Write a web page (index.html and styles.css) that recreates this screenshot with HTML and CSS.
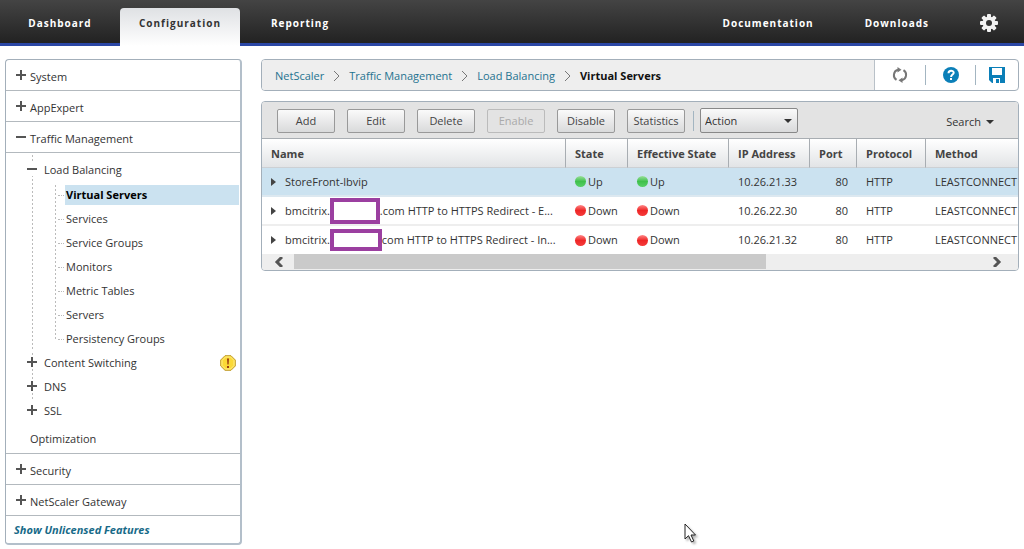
FILE: index.html
```html
<!DOCTYPE html>
<html lang="en">

<head>
    <meta charset="UTF-8">
    <meta name="viewport" content="width=device-width, initial-scale=1.0">
    <title>NetScaler - Virtual Servers</title>
    <link rel="stylesheet" href="styles.css">
</head>

<body>
    <header class="topbar">
        <nav class="tabs">
            <a class="tab" href="#">Dashboard</a>
            <a class="tab active" href="#">Configuration</a>
            <a class="tab" href="#">Reporting</a>
        </nav>
        <div class="links">
            <a href="#">Documentation</a>
            <a href="#">Downloads</a>
            <button type="button" class="gear" aria-label="Settings">
                <svg width="18" height="18" viewBox="0 0 18 18">
                    <g fill="#f2f2f2">
                        <rect x="7" y="0" width="4" height="18" rx="1" />
                        <rect x="7" y="0" width="4" height="18" rx="1" transform="rotate(45 9 9)" />
                        <rect x="7" y="0" width="4" height="18" rx="1" transform="rotate(90 9 9)" />
                        <rect x="7" y="0" width="4" height="18" rx="1" transform="rotate(135 9 9)" />
                        <circle cx="9" cy="9" r="6.5" />
                    </g>
                    <circle cx="9" cy="9" r="3" fill="#333" />
                </svg>
            </button>
        </div>
    </header>

    <main class="main">
        <aside class="sidebar">
            <div class="group"><button type="button" class="toggle plus" aria-label="Expand System"></button><a href="#">System</a></div>
            <div class="group"><button type="button" class="toggle plus" aria-label="Expand AppExpert"></button><a href="#">AppExpert</a></div>
            <div class="group"><button type="button" class="toggle" aria-label="Collapse Traffic Management"></button><a href="#">Traffic Management</a></div>
            <div class="subtree">
                <ul class="tree">
                    <li>
                        <div class="node"><button type="button" class="toggle" aria-label="Collapse Load Balancing"></button><a href="#">Load Balancing</a></div>
                        <ul class="leaves">
                            <li class="selected"><a href="#">Virtual Servers</a></li>
                            <li><a href="#">Services</a></li>
                            <li><a href="#">Service Groups</a></li>
                            <li><a href="#">Monitors</a></li>
                            <li><a href="#">Metric Tables</a></li>
                            <li><a href="#">Servers</a></li>
                            <li><a href="#">Persistency Groups</a></li>
                        </ul>
                    </li>
                    <li>
                        <div class="node">
                            <button type="button" class="toggle plus" aria-label="Expand Content Switching"></button><a href="#">Content Switching</a>
                            <svg class="warn" width="16" height="16" viewBox="0 0 16 16">
                                <path d="M5 .7h6L15.3 5v6L11 15.3H5L.7 11V5z" fill="#fbd936" stroke="#c09a2a" />
                                <path d="M5.500 2h5L14 5.500v5L10.500 14h-5L2 10.500v-5z" fill="none" stroke="#fdeb86" />
                                <path d="M7 3.500h2L8.600 9.500H7.400z" fill="#9a3c10" />
                                <rect x="7" y="11" width="2" height="2" fill="#9a3c10" />
                            </svg>
                        </div>
                    </li>
                    <li><div class="node"><button type="button" class="toggle plus" aria-label="Expand DNS"></button><a href="#">DNS</a></div></li>
                    <li><div class="node"><button type="button" class="toggle plus" aria-label="Expand SSL"></button><a href="#">SSL</a></div></li>
                </ul>
                <a class="lone" href="#">Optimization</a>
            </div>
            <div class="group"><button type="button" class="toggle plus" aria-label="Expand Security"></button><a href="#">Security</a></div>
            <div class="group"><button type="button" class="toggle plus" aria-label="Expand NetScaler Gateway"></button><a href="#">NetScaler Gateway</a></div>
            <a class="unlicensed" href="#">Show Unlicensed Features</a>
        </aside>

        <section class="content">
            <div class="pathbar">
                <nav class="crumbs">
                    <a href="#">NetScaler</a>
                    <svg width="7" height="12" viewBox="0 0 7 12"><path d="M1 1l5 5-5 5" /></svg>
                    <a href="#">Traffic Management</a>
                    <svg width="7" height="12" viewBox="0 0 7 12"><path d="M1 1l5 5-5 5" /></svg>
                    <a href="#">Load Balancing</a>
                    <svg width="7" height="12" viewBox="0 0 7 12"><path d="M1 1l5 5-5 5" /></svg>
                    <b>Virtual Servers</b>
                </nav>
                <div class="tools">
                    <button type="button" aria-label="Refresh">
                        <svg width="16" height="16" viewBox="0 0 16 16">
                            <path d="M4.500 12.800A5.500 5.500 0 0 1 6 2.800M11.500 3.200A5.500 5.500 0 0 1 10 13.200" fill="none" stroke="#777" stroke-width="2" />
                            <path d="M5.500 0l4 2.800-4 2.800zM10.500 16l-4-2.800 4-2.800z" fill="#777" />
                        </svg>
                    </button>
                    <button type="button" aria-label="Help">
                        <svg width="16" height="16" viewBox="0 0 16 16">
                            <circle cx="8" cy="8" r="8" fill="#0b7fb8" />
                            <path d="M5.500 6.200c0-3.400 5.200-3.200 5.200-.4C10.700 7.600 8.100 7.600 8.100 10" fill="none" stroke="#fff" stroke-width="2" />
                            <rect x="7" y="11" width="2" height="2" fill="#fff" />
                        </svg>
                    </button>
                    <button type="button" aria-label="Save">
                        <svg width="16" height="16" viewBox="0 0 16 16">
                            <path d="M0 0h16v16H3l-3-3z" fill="#0b7fb8" />
                            <path d="M3 1h10v7H3z" fill="#fff" />
                            <path d="M4 11h7v5H4z" fill="#fff" />
                            <path d="M7 12h3v4H7z" fill="#0b7fb8" />
                        </svg>
                    </button>
                </div>
            </div>

            <div class="panel">
                <div class="toolbar">
                    <button type="button" class="btn">Add</button>
                    <button type="button" class="btn">Edit</button>
                    <button type="button" class="btn">Delete</button>
                    <button type="button" class="btn" disabled>Enable</button>
                    <button type="button" class="btn">Disable</button>
                    <button type="button" class="btn">Statistics</button>
                    <div class="action">
                        <select aria-label="Action">
                            <option>Action</option>
                        </select>
                    </div>
                    <button type="button" class="search">Search</button>
                </div>
                <table class="grid">
                    <colgroup>
                        <col>
                        <col class="c-state">
                        <col class="c-effective">
                        <col class="c-ip">
                        <col class="c-port">
                        <col class="c-protocol">
                        <col class="c-method">
                    </colgroup>
                    <thead>
                        <tr>
                            <th>Name</th>
                            <th>State</th>
                            <th>Effective State</th>
                            <th>IP Address</th>
                            <th>Port</th>
                            <th>Protocol</th>
                            <th>Method</th>
                        </tr>
                    </thead>
                    <tbody>
                        <tr class="selected">
                            <td><div class="name">StoreFront-lbvip</div></td>
                            <td><span class="up">Up</span></td>
                            <td><span class="up">Up</span></td>
                            <td>10.26.21.33</td>
                            <td class="num">80</td>
                            <td>HTTP</td>
                            <td>LEASTCONNECT</td>
                        </tr>
                        <tr>
                            <td><div class="name">bmcitrix.<span class="mask tall"></span>.com HTTP to HTTPS Redirect - E...</div></td>
                            <td><span class="down">Down</span></td>
                            <td><span class="down">Down</span></td>
                            <td>10.26.22.30</td>
                            <td class="num">80</td>
                            <td>HTTP</td>
                            <td>LEASTCONNECT</td>
                        </tr>
                        <tr>
                            <td><div class="name">bmcitrix.<span class="mask"></span>com HTTP to HTTPS Redirect - In...</div></td>
                            <td><span class="down">Down</span></td>
                            <td><span class="down">Down</span></td>
                            <td>10.26.21.32</td>
                            <td class="num">80</td>
                            <td>HTTP</td>
                            <td>LEASTCONNECT</td>
                        </tr>
                    </tbody>
                </table>
                <div class="scroll">
                    <button type="button" aria-label="Scroll left"><svg width="10" height="10" viewBox="0 0 10 10"><path d="M9 0L4 5l5 5" /></svg></button>
                    <div class="track"><div class="thumb"></div></div>
                    <button type="button" aria-label="Scroll right"><svg width="10" height="10" viewBox="0 0 10 10"><path d="M1 0l5 5-5 5" /></svg></button>
                </div>
            </div>
        </section>
    </main>

    <svg class="pointer" width="14" height="21" viewBox="0 0 14 21">
        <path d="M1 1v15l3.500-3.300L7.500 19l2.300-1-2.800-6h4.500z" fill="#fff" stroke="#222" />
    </svg>
</body>

</html>
```
FILE: styles.css
```css
* {
    padding: 0;
    margin: 0;
    box-sizing: border-box;
}

body {
    background: #fff;
    color: #333;
    font-family: "Open Sans", "Noto Sans", sans-serif;
    font-size: 11px;
    line-height: 16px;
}

a {
    color: inherit;
    text-decoration: none;
}

button,
select {
    border: 0;
    background: none;
    color: inherit;
    font: inherit;
}

ul {
    list-style: none;
}

svg {
    display: block;
}

/* top bar */
.topbar {
    display: flex;
    justify-content: space-between;
    height: 46px;
    background: linear-gradient(#444, #222);
    border-bottom: 3px solid #2b47a5;
    color: #fff;
    font-size: 10px;
    font-weight: bold;
    letter-spacing: 1px;
}

.tabs {
    display: flex;
    align-items: flex-start;
    padding-top: 8px;
}

.tab {
    width: 120px;
    height: 38px;
    padding-top: 7px;
    text-align: center;
}

.tab.active {
    background: linear-gradient(#dfe1e4, #fff);
    border-radius: 4px 4px 0 0;
    color: #333;
}

.links {
    display: flex;
    align-items: center;
    gap: 51px;
    padding: 2px 26px 0 0;
}

/* layout */
.main {
    display: flex;
    align-items: flex-start;
    gap: 19px;
    padding: 13px 5px 4px;
}

.sidebar {
    flex: none;
    width: 237px;
    border: 1px solid #a3afba;
    border-right: 2px solid #b3bfca;
    border-bottom: 2px solid #b3bfca;
    border-radius: 4px;
}

.content {
    flex: 1;
    min-width: 0;
}

/* tree */
.group {
    display: flex;
    align-items: center;
    gap: 4px;
    height: 31px;
    padding: 4px 0 0 10px;
    border-bottom: 1px solid #b3b9be;
}

.group .toggle {
    margin-bottom: 4px;
}

.toggle {
    flex: none;
    width: 10px;
    height: 10px;
    background: linear-gradient(#555, #555) center / 10px 2px no-repeat;
}

.toggle.plus {
    background: linear-gradient(#555, #555) center / 10px 2px no-repeat, linear-gradient(#555, #555) center / 2px 10px no-repeat;
}

.subtree {
    padding-bottom: 2px;
    border-bottom: 1px solid #b3b9be;
}

.tree > li {
    padding-left: 21px;
    background: linear-gradient(#fff 50%, #bbb 50%) 26px 0 / 1px 4px repeat-y;
}

.tree > li:first-child {
    padding-top: 5px;
}

.tree > li:last-child {
    background: none;
}

.node {
    display: flex;
    align-items: center;
    gap: 7px;
    height: 24px;
    padding-right: 4px;
}

.node .toggle {
    outline: 2px solid #fff;
    background-color: #fff;
    margin-bottom: 2px;
}

.warn {
    margin-left: auto;
}

.leaves {
    padding-top: 1px;
    margin-left: 28px;
}

.leaves li {
    display: flex;
    align-items: center;
    height: 24px;
    background: linear-gradient(#fff 50%, #bbb 50%) 0 0 / 1px 4px repeat-y;
}

.leaves li:last-child {
    background: repeating-linear-gradient(#fff 0 2px, #bbb 2px 4px) 0 0 / 1px 12px no-repeat;
}

.leaves li::before {
    content: "";
    width: 6px;
    margin: 0 3px;
    border-top: 1px dotted #bbb;
}

.leaves a {
    flex: 1;
    padding: 2px 0 2px 1px;
    margin: 0 1px 0 -2px;
}

.leaves .selected a {
    background: #cbe2f0;
    color: #000;
    font-weight: bold;
}

.lone {
    display: block;
    padding: 8px 0 4px 24px;
}

.unlicensed {
    display: block;
    padding: 6px 8px 5px;
    color: #176a88;
    font-weight: bold;
    font-style: italic;
}

/* breadcrumbs */
.pathbar {
    display: flex;
    height: 32px;
    margin-bottom: 10px;
    border: 1px solid #a3afba;
    border-radius: 4px;
    overflow: hidden;
}

.crumbs {
    flex: 1;
    display: flex;
    align-items: center;
    gap: 9px;
    padding: 2px 0 0 13px;
    background: #eee;
    border-right: 1px solid #b9c1c8;
    color: #1f7390;
}

.crumbs svg {
    fill: none;
    stroke: #777;
}

.crumbs b {
    color: #111;
}

.tools {
    display: flex;
    align-items: center;
}

.tools button {
    display: flex;
    align-items: center;
    justify-content: center;
    width: 50px;
    height: 20px;
}

.tools button:last-child {
    width: 43px;
}

.tools button + button {
    border-left: 1px solid #a3b5c1;
}

/* grid panel */
.panel {
    border: 1px solid #a3afba;
    border-radius: 4px;
    overflow: hidden;
}

.toolbar {
    display: flex;
    align-items: center;
    gap: 12px;
    height: 37px;
    padding: 1px 24px 0 15px;
    background: #e3e3e3;
    border-bottom: 1px solid #a8adb2;
}

.btn {
    width: 58px;
    height: 24px;
    background: linear-gradient(#fafafa, #d9dadb);
    border: 1px solid #999;
    border-radius: 2px;
    color: #444;
}

.btn:disabled {
    background: #e3e3e3;
    border-color: #bbb;
    color: #aaa;
}

.action {
    margin-left: -4px;
    padding-left: 6px;
    border-left: 1px solid #a3b5c1;
    height: 20px;
    display: flex;
    align-items: center;
}

.action select {
    appearance: none;
    width: 98px;
    height: 25px;
    padding-left: 4px;
    background: linear-gradient(#fafafa, #d9dadb);
    border: 1px solid #888;
    border-radius: 2px;
}

.action::after {
    content: "";
    width: 0;
    margin-left: -14px;
    margin-right: 6px;
    border: 4px solid transparent;
    border-top-color: #333;
    border-bottom: 0;
    pointer-events: none;
}

.search {
    display: flex;
    align-items: center;
    gap: 5px;
    margin-left: auto;
    padding-top: 2px;
}

.search::after {
    content: "";
    border: 4px solid transparent;
    border-top-color: #333;
    border-bottom: 0;
}

.grid {
    width: 100%;
    table-layout: fixed;
    border-collapse: separate;
    border-spacing: 0;
}

.c-state {
    width: 62px;
}

.c-effective {
    width: 101px;
}

.c-ip {
    width: 81px;
}

.c-port {
    width: 47px;
}

.c-protocol {
    width: 69px;
}

.c-method {
    width: 92px;
}

.grid th {
    height: 29px;
    padding: 2px 0 0 9px;
    background: linear-gradient(#fff, #e2e4e6);
    border-right: 1px solid #a8adb2;
    border-bottom: 1px solid #ccd0d4;
    color: #444;
    text-align: left;
    white-space: nowrap;
}

.grid th:last-child {
    border-right: 0;
}

.grid td {
    height: 29px;
    padding-left: 9px;
    border-bottom: 2px solid #eee;
    white-space: nowrap;
}

.grid tr:last-child td {
    height: 28px;
    border-bottom: 0;
}

.grid .selected td {
    background: #cbe2f0;
    border-color: #dce8f0;
}

.grid .num {
    padding: 0 9px 0 0;
    text-align: right;
}

.name {
    display: flex;
    align-items: center;
    height: 26px;
}

.name::before {
    content: "";
    margin-right: 9px;
    border: 4px solid transparent;
    border-left: 5px solid #444;
    border-right: 0;
}

.mask {
    width: 52px;
    height: 22px;
    background: #fff;
    border: 4px solid #9b3fa0;
}

.mask.tall {
    width: 50px;
    height: 26px;
}

.up,
.down {
    display: flex;
    align-items: center;
    gap: 2px;
}

.up::before,
.down::before {
    content: "";
    width: 11px;
    height: 11px;
    border-radius: 50%;
}

.up::before {
    background: linear-gradient(#9be09b, #3fc04c 50%, #58d068);
}

.down::before {
    background: linear-gradient(#f88, #ee2626 50%, #f53c3c);
}

.scroll {
    display: flex;
    height: 16px;
    background: #eee;
}

.scroll button {
    display: flex;
    align-items: center;
    justify-content: center;
    width: 32px;
}

.scroll button:last-child {
    width: 40px;
}

.scroll svg {
    fill: none;
    stroke: #555;
    stroke-width: 3;
}

.track {
    flex: 1;
}

.thumb {
    width: 69%;
    height: 15px;
    background: #cacaca;
}

/* mouse pointer over the page */
.pointer {
    position: absolute;
    left: 684px;
    top: 523px;
    filter: drop-shadow(2px 2px 1px rgba(0, 0, 0, .3));
}
```
